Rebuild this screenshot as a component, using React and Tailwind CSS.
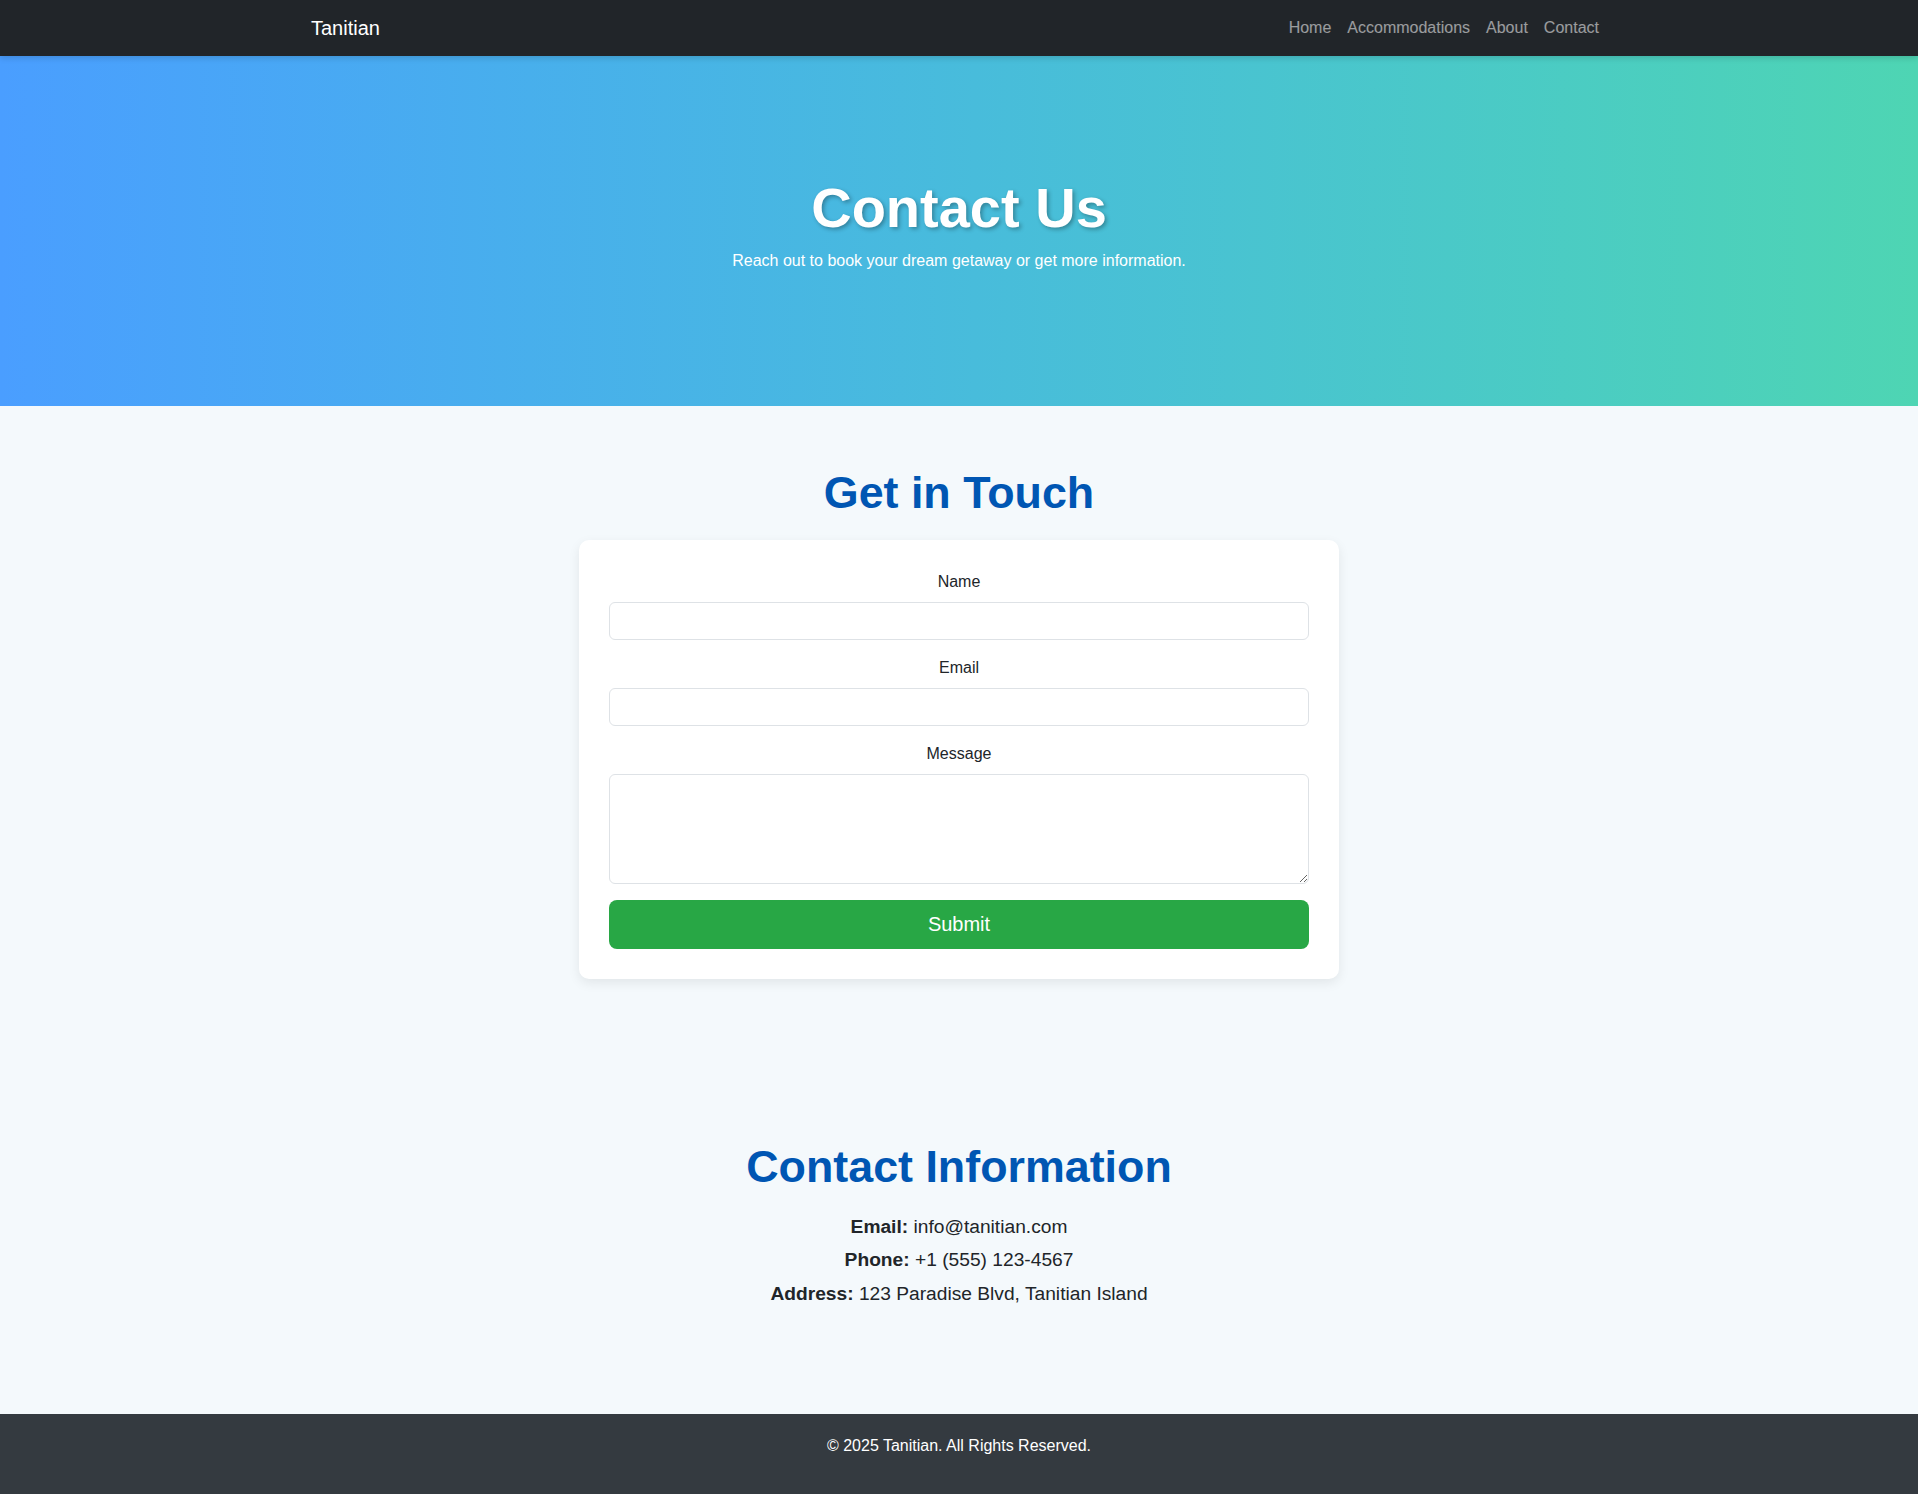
import { useState } from "react";

const links = ["Home", "Accommodations", "About", "Contact"];

const Field = ({ label, children }) => (
  <div className="mb-4 text-center">
    <label className="block mb-2 text-base leading-6 text-[#212529]">{label}</label>
    {children}
  </div>
);

export default function App() {
  const [form, setForm] = useState({ name: "", email: "", message: "" });

  const update = (key) => (e) => setForm((prev) => ({ ...prev, [key]: e.target.value }));

  return (
    <div className="min-h-screen bg-[#f4f9fc] font-['Liberation_Sans',Arial,sans-serif] text-[#212529]">
      {/* navbar */}
      <nav className="relative z-10 h-[56px] bg-[#212529] shadow-[0_2px_6px_rgba(0,0,0,0.15)]">
        <div className="mx-auto flex h-full w-[1320px] items-center justify-between px-3">
          <a href="#" className="text-[20px] leading-[30px] text-white">
            Tanitian
          </a>
          <ul className="flex">
            {links.map((link) => (
              <li key={link}>
                <a href="#" className="block px-2 text-base leading-6 text-white/55 hover:text-white/75">
                  {link}
                </a>
              </li>
            ))}
          </ul>
        </div>
      </nav>

      {/* hero */}
      <header className="h-[350px] bg-linear-to-r from-[#4a9eff] to-[#4ed5b3] pt-[118px] text-center text-white">
        <h1 className="mb-2 text-[56px] font-bold leading-[1.2] [text-shadow:2px_2px_4px_rgba(0,0,0,0.3)]">
          Contact Us
        </h1>
        <p className="text-base leading-6">Reach out to book your dream getaway or get more information.</p>
      </header>

      {/* form */}
      <section className="pt-[60px]">
        <h2 className="mb-[20px] text-center text-[44.8px] font-bold leading-[1.2] text-[#0056b3]">Get in Touch</h2>
        <form
          className="mx-auto w-[760px] rounded-[10px] bg-white p-[30px] shadow-[0_4px_12px_rgba(0,0,0,0.08)]"
          onSubmit={(e) => e.preventDefault()}
        >
          <Field label="Name">
            <input
              type="text"
              value={form.name}
              onChange={update("name")}
              className="block h-[38px] w-full rounded-[6px] border border-[#dee2e6] bg-white px-3 text-base outline-none focus:border-[#86b7fe]"
            />
          </Field>
          <Field label="Email">
            <input
              type="email"
              value={form.email}
              onChange={update("email")}
              className="block h-[38px] w-full rounded-[6px] border border-[#dee2e6] bg-white px-3 text-base outline-none focus:border-[#86b7fe]"
            />
          </Field>
          <Field label="Message">
            <textarea
              rows={4}
              value={form.message}
              onChange={update("message")}
              className="block h-[110px] w-full rounded-[6px] border border-[#dee2e6] bg-white px-3 py-1.5 text-base outline-none focus:border-[#86b7fe]"
            />
          </Field>
          <button
            type="submit"
            className="block h-[49px] w-full rounded-[8px] bg-[#28a745] text-[20px] text-white hover:bg-[#218838]"
          >
            Submit
          </button>
        </form>
      </section>

      {/* contact info */}
      <section className="pb-[104px] pt-[161px] text-center">
        <h2 className="mb-4 text-[44.8px] font-bold leading-[1.2] text-[#0056b3]">Contact Information</h2>
        <p className="text-[19.2px] leading-[33.5px]">
          <strong>Email:</strong> info@tanitian.com
        </p>
        <p className="text-[19.2px] leading-[33.5px]">
          <strong>Phone:</strong> +1 (555) 123-4567
        </p>
        <p className="text-[19.2px] leading-[33.5px]">
          <strong>Address:</strong> 123 Paradise Blvd, Tanitian Island
        </p>
      </section>

      {/* footer */}
      <footer className="h-[80px] bg-[#343a40] pt-5 text-center text-white">
        <p className="text-base leading-6">© 2025 Tanitian. All Rights Reserved.</p>
      </footer>
    </div>
  );
}
